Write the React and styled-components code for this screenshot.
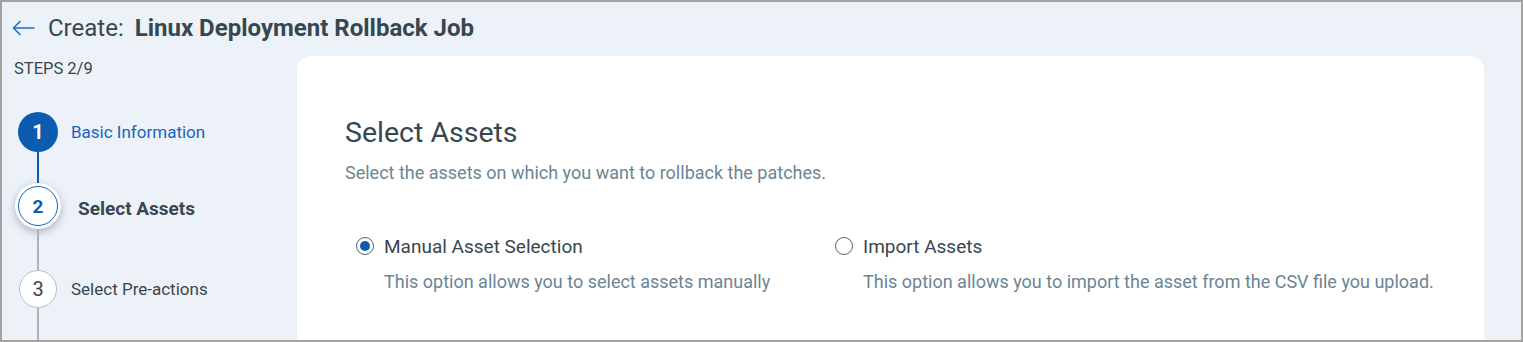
import React from "react";
import styled, { createGlobalStyle } from "styled-components";

const GlobalStyle = createGlobalStyle`
  html, body {
    margin: 0;
    padding: 0;
    background: #ffffff;
  }
  * {
    box-sizing: border-box;
  }
`;

const Frame = styled.div`
  width: 1523px;
  height: 342px;
  border: 2px solid #a3a3a3;
  background: #edf2f9;
  overflow: hidden;
  display: flex;
  flex-direction: column;
  font-family: Roboto, "Liberation Sans", sans-serif;
  color: #37474f;
`;

const Header = styled.div`
  height: 52px;
  flex-shrink: 0;
  display: flex;
  align-items: center;
  padding-left: 10px;
  gap: 13px;
`;

const BackButton = styled.button`
  border: none;
  background: none;
  padding: 0;
  display: flex;
  align-items: center;
  color: #1e6fc5;
  cursor: pointer;
`;

const Title = styled.h1`
  margin: 0;
  font-size: 24px;
  font-weight: 400;
  color: #37474f;
  white-space: nowrap;
`;

const JobName = styled.span`
  font-weight: 700;
  margin-left: 11px;
`;

const Main = styled.div`
  flex: 1;
  display: flex;
  min-height: 0;
`;

const Sidebar = styled.aside`
  width: 295px;
  flex-shrink: 0;
  display: flex;
  flex-direction: column;
`;

const StepsCount = styled.div`
  font-size: 16.5px;
  line-height: 22px;
  padding: 4px 0 0 12px;
  color: #37474f;
`;

const StepList = styled.ol`
  list-style: none;
  margin: 32px 0 0;
  padding: 0 0 0 14px;
`;

const Step = styled.li`
  display: flex;
  align-items: flex-start;
`;

const Rail = styled.div`
  width: 44px;
  display: flex;
  flex-direction: column;
  align-items: center;
`;

const Circle = styled.div`
  width: ${(p) => p.$size}px;
  height: ${(p) => p.$size}px;
  border-radius: 50%;
  display: flex;
  align-items: center;
  justify-content: center;
  font-size: ${(p) => (p.$state === "current" ? 19 : 20)}px;
  font-weight: ${(p) => (p.$state === "pending" ? 400 : 700)};
  flex-shrink: 0;
  ${(p) =>
    p.$state === "done" &&
    `
    background: #0b5cb0;
    color: #ffffff;
  `}
  ${(p) =>
    p.$state === "current" &&
    `
    background: #ffffff;
    color: #0b5cb0;
    box-shadow: 0 3px 8px rgba(40, 60, 80, 0.35);
  `}
  ${(p) =>
    p.$state === "pending" &&
    `
    background: #ffffff;
    color: #37474f;
    border: 1px solid #b5c0c8;
  `}
`;

const Ring = styled.div`
  width: 40px;
  height: 40px;
  border-radius: 50%;
  border: 1.5px solid #1565c0;
  display: flex;
  align-items: center;
  justify-content: center;
`;

const Connector = styled.div`
  width: 2px;
  height: ${(p) => p.$length}px;
  background: ${(p) => (p.$active ? "#0b5cb0" : "#a9b5bd")};
`;

const StepLabel = styled.div`
  height: ${(p) => p.$size}px;
  display: flex;
  align-items: center;
  padding-top: ${(p) => (p.$state === "current" ? 5 : 0)}px;
  margin-left: ${(p) => (p.$state === "current" ? 18 : 11)}px;
  font-size: ${(p) => (p.$state === "current" ? 19 : 17)}px;
  font-weight: ${(p) => (p.$state === "current" ? 700 : 400)};
  color: ${(p) => (p.$state === "done" ? "#1565c0" : "#37474f")};
  white-space: nowrap;
`;

const Card = styled.section`
  flex: 1;
  margin: 2px 37px 0 0;
  background: #ffffff;
  border-radius: 14px 14px 0 0;
  padding: 59px 48px 0;
`;

const Heading = styled.h2`
  margin: 0;
  font-size: 28.5px;
  line-height: 36px;
  font-weight: 400;
  color: #37474f;
`;

const Subtitle = styled.p`
  margin: 10px 0 0;
  font-size: 18px;
  line-height: 24px;
  color: #6b8594;
`;

const Options = styled.div`
  margin-top: 48px;
  display: grid;
  grid-template-columns: 479px auto;
`;

const Option = styled.label`
  display: flex;
  flex-direction: column;
  padding-left: 11px;
  cursor: pointer;
`;

const OptionRow = styled.div`
  display: flex;
  align-items: center;
  gap: 10px;
  height: 26px;
`;

const Radio = styled.span`
  width: 18px;
  height: 18px;
  border-radius: 50%;
  border: 1.5px solid #56646d;
  display: flex;
  align-items: center;
  justify-content: center;
  flex-shrink: 0;

  &::after {
    content: "";
    width: 10px;
    height: 10px;
    border-radius: 50%;
    background: ${(p) => (p.$checked ? "#0b5cb0" : "transparent")};
  }
`;

const OptionTitle = styled.span`
  font-size: 19px;
  color: #37474f;
`;

const OptionText = styled.span`
  margin: 11px 0 0 28px;
  font-size: 18px;
  line-height: 24px;
  color: #6b8594;
  white-space: nowrap;
`;

const steps = [
  { n: 1, label: "Basic Information", state: "done", size: 40, line: 31, lineActive: true },
  { n: 2, label: "Select Assets", state: "current", size: 46, line: 41, lineActive: false },
  { n: 3, label: "Select Pre-actions", state: "pending", size: 38, line: 60, lineActive: false },
];

const options = [
  {
    title: "Manual Asset Selection",
    text: "This option allows you to select assets manually",
    checked: true,
  },
  {
    title: "Import Assets",
    text: "This option allows you to import the asset from the CSV file you upload.",
    checked: false,
  },
];

const ArrowLeft = () => (
  <svg width="23" height="16" viewBox="0 0 23 16" fill="none">
    <path
      d="M22 8H1.5M8 1.5L1.5 8L8 14.5"
      stroke="currentColor"
      strokeWidth="1.6"
      strokeLinecap="round"
      strokeLinejoin="round"
    />
  </svg>
);

export default function App() {
  return (
    <>
      <GlobalStyle />
      <Frame>
        <Header>
          <BackButton aria-label="Back">
            <ArrowLeft />
          </BackButton>
          <Title>
            Create:<JobName>Linux Deployment Rollback Job</JobName>
          </Title>
        </Header>
        <Main>
          <Sidebar>
            <StepsCount>STEPS 2/9</StepsCount>
            <StepList>
              {steps.map((s) => (
                <Step key={s.n}>
                  <Rail>
                    <Circle $size={s.size} $state={s.state}>
                      {s.state === "current" ? <Ring>{s.n}</Ring> : s.n}
                    </Circle>
                    <Connector $length={s.line} $active={s.lineActive} />
                  </Rail>
                  <StepLabel $size={s.size} $state={s.state}>
                    {s.label}
                  </StepLabel>
                </Step>
              ))}
            </StepList>
          </Sidebar>
          <Card>
            <Heading>Select Assets</Heading>
            <Subtitle>Select the assets on which you want to rollback the patches.</Subtitle>
            <Options>
              {options.map((o) => (
                <Option key={o.title}>
                  <OptionRow>
                    <Radio $checked={o.checked} />
                    <OptionTitle>{o.title}</OptionTitle>
                  </OptionRow>
                  <OptionText>{o.text}</OptionText>
                </Option>
              ))}
            </Options>
          </Card>
        </Main>
      </Frame>
    </>
  );
}
